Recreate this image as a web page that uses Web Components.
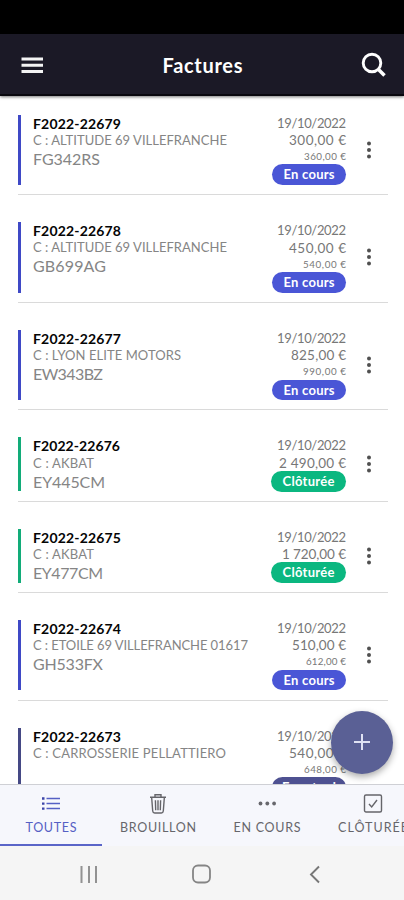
<!DOCTYPE html>
<html lang="fr">
<head>
<meta charset="utf-8">
<title>Factures</title>
<style>
html,body{margin:0;height:100%;overflow:hidden;background:#fff}
</style>
</head>
<body>
<invoice-app></invoice-app>
<script>
// Text run whose tracking is adjusted so that it spans the width given in "w".
class FitText extends HTMLElement{
  connectedCallback(){
    const r=this.attachShadow({mode:'open'});
    r.innerHTML='<style>:host{display:inline-block;white-space:pre}span{display:inline-block}</style><span></span>';
    const s=r.querySelector('span'),t=this.getAttribute('text'),w=+this.getAttribute('w');
    s.textContent=t;
    const n=s.getBoundingClientRect().width,ls=(w-n)/(t.length-1);
    s.style.letterSpacing=ls+'px';
    s.style.marginRight=-ls+'px';
  }
}
customElements.define('fit-text',FitText);

class TopBar extends HTMLElement{
  connectedCallback(){
    this.attachShadow({mode:'open'}).innerHTML=`<style>
    :host{display:block;flex:none;background:#1b1926;box-shadow:0 1px 3px #0008;position:relative;z-index:2}
    .status{height:34px;background:#000}
    header{height:60px;border-bottom:2px solid #08070d;display:grid;grid-template-columns:60px 1fr 60px;align-items:center;justify-items:center;color:#fff;font-weight:700;font-size:20px;line-height:26px}
    svg{display:block}
    .m{justify-self:start;margin-left:21px;margin-top:1px}.s{justify-self:start;margin-left:17px;margin-top:2px}
    fit-text{margin-left:1px;margin-top:1px}
    </style><div class="status"></div><header>
    <svg class="m" width="23" height="18" fill="#f4f4f4"><path d="M.5 1.500h21.500v3H.5zM.5 7.800h21.500v3H.5zM.5 14h21.500v3H.5z"/></svg>
    <fit-text text="Factures" w="80"></fit-text>
    <svg class="s" width="26" height="26" fill="none" stroke="#fff"><circle cx="11" cy="11" r="8.800" stroke-width="2.900"/><path d="M17 17l6.500 6.500" stroke-width="3.500"/></svg>
    </header>`;
  }
}
customElements.define('top-bar',TopBar);

class InvoiceRow extends HTMLElement{
  connectedCallback(){
    const a=n=>this.getAttribute(n);
    const f=(c,n)=>{const v=a(n);if(!v)return '';const [t,w]=v.split('|');return `<div class="${c}"><fit-text text="${t}" w="${w}"></fit-text></div>`};
    this.attachShadow({mode:'open'}).innerHTML=`<style>
    :host{display:block;flex:none;margin:0 16px 0 18px;padding:27px 0 9.250px;border-bottom:1px solid #dadada;--c:#4a56d6;--b:#3f49c6}
    :host([kind=done]){--c:#0bb780;--b:#12ac79}
    :host([kind=part]){--c:#4e5191;--b:#454985}
    :host([first]){padding-top:18.500px}
    .r{height:70.400px;border-left:3.400px solid var(--b);padding-left:12px;display:grid;grid-template-columns:1fr auto 42px}
    :host([kind=done]) .r{height:54px}
    .l,.v{white-space:nowrap}
    .l{color:#858585}
    .t{font-size:14px;line-height:17px;height:17.200px;font-weight:700;color:#050505}
    .c{font-size:13px;line-height:17px;height:17px}
    .p{font-size:16px;line-height:19px;height:19px}
    .v{display:flex;flex-direction:column;align-items:flex-end;color:#777}
    .d{font-size:13px;line-height:17px;height:17.500px}
    .a{font-size:13.500px;line-height:16px;height:16px}
    .x{font-size:9.800px;line-height:16px;height:16.400px;color:#777}
    .g{width:74px;height:20.600px;border-radius:11px;background:var(--c);color:#fff;font-weight:700;font-size:13px;line-height:21px;text-align:center}
    :host([kind=done]) .g{width:75px}
    .k{align-self:center;justify-self:center;margin-left:4px}
    svg{display:block}
    </style><div class="r"><div class="l">${f('t','num')}${f('c','client')}${f('p','plate')}</div>
    <div class="v">${f('d','date')}${f('a','net')}${f('x','tax')}${f('g','state')}</div>
    <svg class="k" width="6" height="20" fill="#505050"><circle cx="3" cy="3.500" r="2"/><circle cx="3" cy="10" r="2"/><circle cx="3" cy="16.500" r="2"/></svg></div>`;
  }
}
customElements.define('invoice-row',InvoiceRow);

class TabItem extends HTMLElement{
  connectedCallback(){
    this.attachShadow({mode:'open'}).innerHTML=`<style>
    :host{display:flex;flex-direction:column;align-items:center;box-sizing:border-box;flex:none;color:#66666b;font-size:12.500px;line-height:16px;padding-top:8px}
    :host([active]){color:#5560c4;border-bottom:2.500px solid #5a65c8}
    .i{height:22px;margin-bottom:5px}
    </style><div class="i"><slot></slot></div><fit-text text="${this.getAttribute('label')}" w="${this.getAttribute('w')}"></fit-text>`;
  }
}
customElements.define('tab-item',TabItem);

class TabStrip extends HTMLElement{
  connectedCallback(){
    this.attachShadow({mode:'open'}).innerHTML=`<style>
    :host{display:flex;flex:none;height:62px;box-sizing:border-box;background:#f6f7fc;border-top:1.500px solid #cfd0d5;overflow:hidden;position:relative}
    svg{display:block}
    </style>
    <tab-item active style="width:102px" label="TOUTES" w="51"><svg width="20" height="22" fill="none" stroke="#5560c4" stroke-width="1.500"><path d="M5.500 5.500H19M5.500 10.600H19M5.500 15.600H19"/><path d="M1 5.500h2.500M1 10.600h2.500M1 15.600h2.500" stroke="#3d45a8" stroke-width="2.300"/></svg></tab-item>
    <tab-item style="width:112px" label="BROUILLON" w="76"><svg width="18" height="22" fill="none" stroke="#65656a" stroke-width="1.400"><path d="M1 4.300h16M6 4V1.800h6V4M2.700 5l1 13q.2 2 2 2h6.600q1.800 0 2-2l1-13M6.400 7.200l.3 10M9 7.200v10M11.600 7.200l-.3 10"/></svg></tab-item>
    <tab-item style="width:106px" label="EN COURS" w="67"><svg width="20" height="22" fill="#67676c"><circle cx="3.500" cy="10.500" r="1.900"/><circle cx="10.300" cy="10.500" r="1.900"/><circle cx="17.100" cy="10.500" r="1.900"/></svg></tab-item>
    <tab-item style="width:106px" label="CLÔTURÉE" w="70"><svg width="20" height="22" fill="none" stroke="#65656a" stroke-width="1.400"><rect x="1.500" y="2" width="17" height="17" rx="1.500"/><path d="M6 11l2.700 3L14 7"/></svg></tab-item>`;
  }
}
customElements.define('tab-strip',TabStrip);

class SystemNav extends HTMLElement{
  connectedCallback(){
    this.attachShadow({mode:'open'}).innerHTML=`<style>
    :host{display:grid;flex:none;height:54px;background:#f5f5f5;grid-template-columns:repeat(3,113px);justify-content:center;justify-items:center;padding:0 1px 0 0;box-sizing:border-box}
    svg{display:block;margin-top:18px}
    </style>
    <svg width="20" height="20" stroke="#929292" stroke-width="2"><path d="M2.500 2v17M10 2v17M17 2v17"/></svg>
    <svg width="20" height="20" fill="none" stroke="#858585" stroke-width="1.800"><rect x="1" y="1.500" width="17" height="17" rx="5"/></svg>
    <svg width="20" height="20" fill="none" stroke="#777" stroke-width="1.900"><path d="M14 2.500L6 10.500l8 8"/></svg>`;
  }
}
customElements.define('system-nav',SystemNav);

class AddButton extends HTMLElement{
  connectedCallback(){
    this.attachShadow({mode:'open'}).innerHTML=`<style>
    :host{position:absolute;right:11px;bottom:10.500px;width:62px;height:63px;border-radius:50%;background:#5a6095;box-shadow:0 3px 7px #0005;display:flex;align-items:center;justify-content:center}
    </style><svg width="18" height="18" stroke="#dfe2f3" stroke-width="2"><path d="M9 1v16M1 9h16"/></svg>`;
  }
}
customElements.define('add-button',AddButton);

class InvoiceApp extends HTMLElement{
  connectedCallback(){
    this.attachShadow({mode:'open'}).innerHTML=`<style>
    :host{display:flex;flex-direction:column;width:404px;height:900px;overflow:hidden;background:#fff;font-family:Lato,"Liberation Sans",sans-serif}
    main{flex:1;min-height:0;overflow:hidden;position:relative;display:flex;flex-direction:column}
    </style><top-bar></top-bar><main>
    <invoice-row first num="F2022-22679|88" client="C : ALTITUDE 69 VILLEFRANCHE|194" plate="FG342RS|67" date="19/10/2022|69" net="300,00 €|57" tax="360,00 €|42" state="En cours|51"></invoice-row>
    <invoice-row num="F2022-22678|88" client="C : ALTITUDE 69 VILLEFRANCHE|194" plate="GB699AG|73" date="19/10/2022|69" net="450,00 €|57" tax="540,00 €|43" state="En cours|51"></invoice-row>
    <invoice-row num="F2022-22677|88" client="C : LYON ELITE MOTORS|148" plate="EW343BZ|70" date="19/10/2022|69" net="825,00 €|55" tax="990,00 €|43" state="En cours|51"></invoice-row>
    <invoice-row kind="done" num="F2022-22676|87" client="C : AKBAT|61" plate="EY445CM|72" date="19/10/2022|69" net="2 490,00 €|67" state="Clôturée|52"></invoice-row>
    <invoice-row kind="done" num="F2022-22675|88" client="C : AKBAT|61" plate="EY477CM|70" date="19/10/2022|69" net="1 720,00 €|64" state="Clôturée|52"></invoice-row>
    <invoice-row num="F2022-22674|88" client="C : ETOILE 69 VILLEFRANCHE 01617|215" plate="GH533FX|70" date="19/10/2022|69" net="510,00 €|54" tax="612,00 €|40" state="En cours|51"></invoice-row>
    <invoice-row kind="part" num="F2022-22673|88" client="C : CARROSSERIE PELLATTIERO|193" date="19/10/2022|69" net="540,00 €|57" tax="648,00 €|42" state="En retard|54"></invoice-row>
    <add-button></add-button></main><tab-strip></tab-strip><system-nav></system-nav>`;
  }
}
customElements.define('invoice-app',InvoiceApp);
</script>
</body>
</html>
